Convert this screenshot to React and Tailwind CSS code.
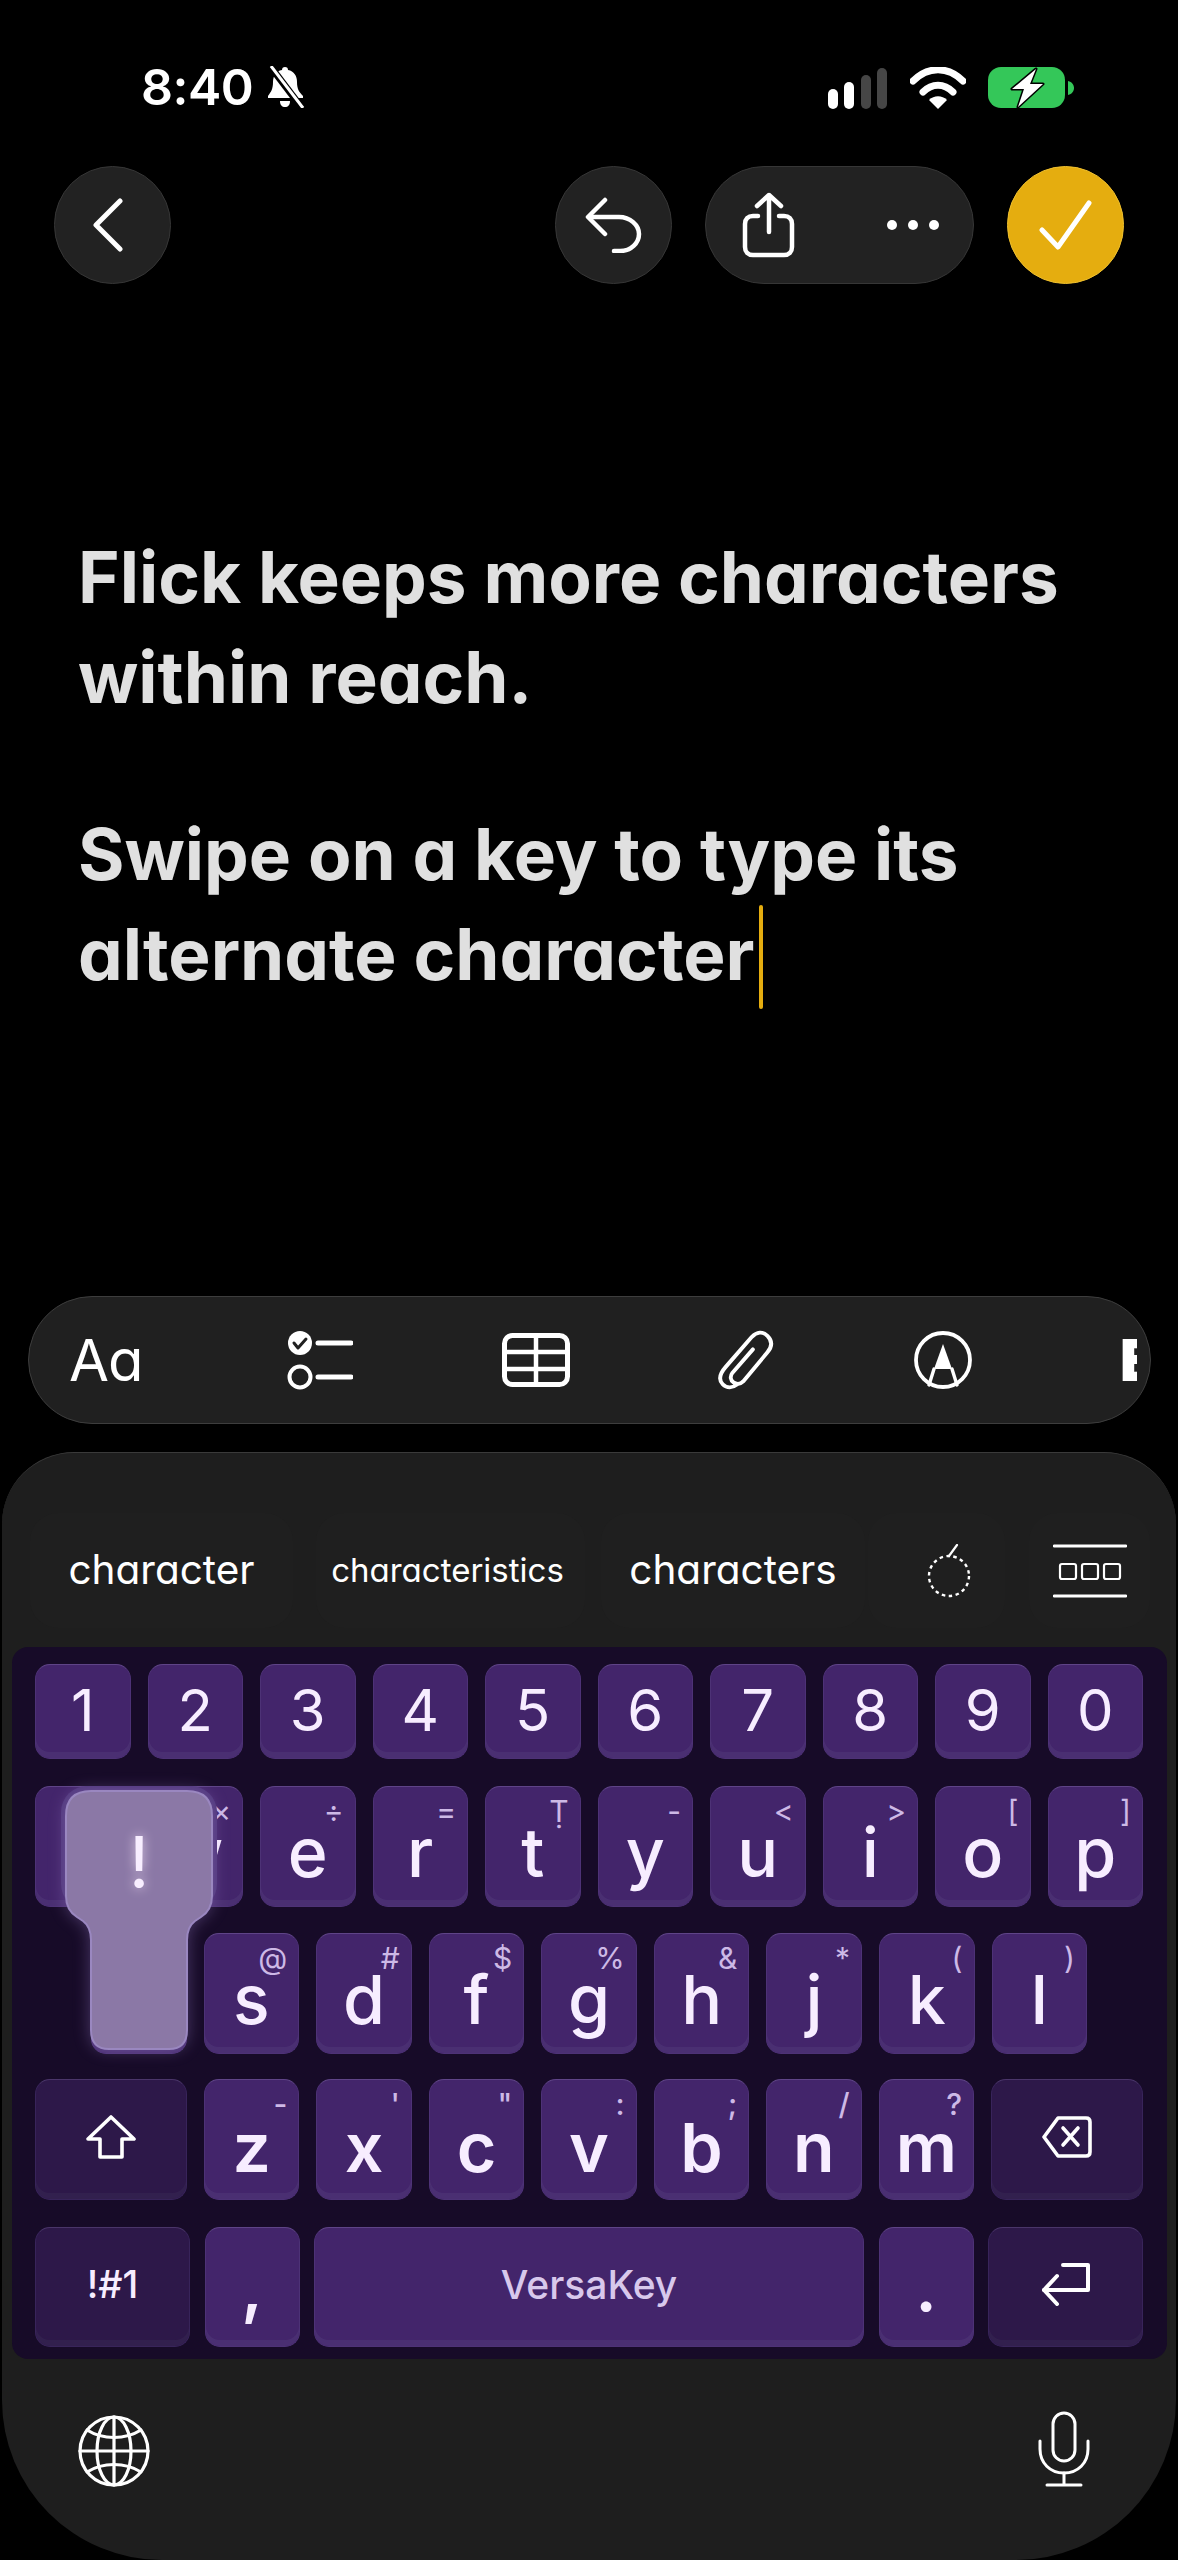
const INTER = "font-['Inter','Liberation_Sans',sans-serif]";

function Key({ main, sub, row = 'letter', dark = false, width = 'flex-1', children }) {
  const text =
    row === 'digit'
      ? 'pt-[16px] text-[58px] font-normal'
      : row === 'punct'
        ? 'pt-[24px] text-[68px] font-semibold'
        : row === 'low'
          ? 'pt-[33px] text-[68px] font-semibold'
          : 'pt-[31px] text-[68px] font-medium';
  return (
    <div
      className={`relative ${width} min-w-0 h-full rounded-[15px] border ${
        dark
          ? 'bg-[#2d1849] border-[#38245a] border-t-[#4a3569] shadow-[inset_0_-6px_0_#32204e]'
          : 'bg-[#43256b] border-[#4d3276] border-t-[#5f4487] shadow-[inset_0_-6px_0_#4a2f72]'
      } flex justify-center ${children ? 'items-center pb-[6px]' : 'items-start'} text-[#f7edff] leading-none`}
    >
      {sub && (
        <span
          className={`absolute top-[9px] right-[11px] text-[30px] leading-[30px] text-[#cdb9e6] ${
            row === 'low' ? 'font-medium' : 'font-normal'
          }`}
        >
          {sub}
        </span>
      )}
      {main && <span className={`${text} leading-none`}>{main}</span>}
      {children}
    </div>
  );
}

function Row({ className = '', children }) {
  return <div className={`flex ${className}`}>{children}</div>;
}

function RoundBtn({ children, className = 'bg-[#222222] border border-[#363636]' }) {
  return (
    <div className={`w-[117px] h-[118px] rounded-full flex items-center justify-center ${className}`}>{children}</div>
  );
}

const ic = { fill: 'none', stroke: 'white', strokeLinecap: 'round', strokeLinejoin: 'round' };

export default function App() {
  return (
    <div className={`relative w-[1178px] h-[2560px] bg-black overflow-hidden flex flex-col ${INTER} [font-feature-settings:'cv11']`}>
      {/* status bar */}
      <div className="h-[166px] pt-[66px] pl-[141px] pr-[103px] flex justify-between items-start text-white">
        <div className="flex items-center gap-[12px] h-[42px]">
          <span className="text-[50px] leading-[42px] font-semibold tracking-[-0.5px]">8:40</span>
          <svg width="41" height="42" viewBox="0 0 41 42">
            <path d="M20 1c2 0 3 1 3 3 6 1 9 6 9 12 0 7 2 10 6 14v2H3v-2c3-4 5-7 5-14 0-6 3-11 9-12 0-2 1-3 3-3z" fill="white" />
            <path d="M15 35h10c0 4-2 6-5 6s-5-2-5-6z" fill="white" />
            <path d="M5 0l32 42" stroke="black" strokeWidth="7" />
            <path d="M6 0l32 42" stroke="white" strokeWidth="3" />
          </svg>
        </div>
        <div className="flex items-start">
          <svg width="60" height="42" viewBox="0 0 60 42" className="mt-[2px]">
            <rect x="0" y="21" width="10" height="20" rx="5" fill="white" />
            <rect x="16" y="14" width="10" height="27" rx="5" fill="white" />
            <rect x="33" y="7" width="10" height="34" rx="5" fill="#464646" />
            <rect x="49" y="0" width="10" height="41" rx="5" fill="#464646" />
          </svg>
          <svg width="56" height="42" viewBox="0 0 56 42" className="ml-[22px] mt-[1px]">
            <path d="M3 14C18-1 38-1 53 14" {...ic} strokeWidth="7" />
            <path d="M13 25C22 16 34 16 43 25" {...ic} strokeWidth="7" />
            <path d="M19 33c5-5 13-5 18 0l-9 9z" fill="white" />
          </svg>
          <svg width="87" height="44" viewBox="0 0 87 44" className="ml-[22px]">
            <rect x="0" y="1" width="77" height="41" rx="13" fill="#34c759" />
            <path d="M80 15c4 1 6 4 6 7s-2 6-6 7z" fill="#34c759" />
            <path d="M48 3L24 23h12l-6 18 25-23H42z" fill="white" stroke="black" strokeWidth="3" strokeLinejoin="round" paintOrder="stroke" />
          </svg>
        </div>
      </div>

      {/* nav */}
      <div className="px-[54px] flex justify-between">
        <RoundBtn>
          <svg width="33" height="54" viewBox="0 0 33 54" className="mr-[10px]">
            <path d="M29 3L5 27l24 24" {...ic} strokeWidth="5" />
          </svg>
        </RoundBtn>
        <div className="flex gap-[33px]">
          <RoundBtn>
            <svg width="57" height="56" viewBox="0 0 57 56">
              <path d="M20 3L3 20l17 17" {...ic} strokeWidth="4.5" />
              <path d="M4 20h30c11 0 20 8 20 17s-8 17-19 17h-6" {...ic} strokeWidth="4.5" />
            </svg>
          </RoundBtn>
          <div className="w-[269px] h-[118px] rounded-[59px] bg-[#222222] border border-[#363636] flex items-center justify-between pl-[36px] pr-[34px]">
            <svg width="53" height="66" viewBox="0 0 53 66">
              <path d="M27 3v37M15 14L27 3l12 11" {...ic} strokeWidth="4.5" />
              <path d="M16 24H11c-5 0-8 3-8 8v23c0 5 3 8 8 8h31c5 0 8-3 8-8V32c0-5-3-8-8-8h-5" {...ic} strokeWidth="4.5" />
            </svg>
            <div className="flex gap-[11px]">
              <span className="w-[10px] h-[10px] rounded-full bg-white" />
              <span className="w-[10px] h-[10px] rounded-full bg-white" />
              <span className="w-[10px] h-[10px] rounded-full bg-white" />
            </div>
          </div>
          <RoundBtn className="bg-[#e5ad0f] border border-[#efc02f]">
            <svg width="53" height="50" viewBox="0 0 53 50">
              <path d="M3 30l16 17L50 3" {...ic} strokeWidth="5" />
            </svg>
          </RoundBtn>
        </div>
      </div>

      {/* note */}
      <div className="mt-[243px] pl-[78px] text-[71px] leading-[100px] font-bold text-[#e0e0e0]">
        <p>Flick keeps more characters</p>
        <p>within reach.</p>
        <p className="mt-[77px]">Swipe on a key to type its</p>
        <p>
          alternate character
          <span className="relative inline-block w-[4px] h-0 ml-[5px]">
            <span className="absolute left-0 bottom-[-29px] w-[4px] h-[104px] rounded-full bg-[#e5ad0f]" />
          </span>
        </p>
      </div>

      {/* bottom */}
      <div className="mt-auto">
        <div className="ml-[28px] w-[1123px] h-[128px] rounded-[64px] bg-[#202020] border border-[#3d3d3d] flex items-center pl-[40px] text-white overflow-hidden">
          <span className="w-[72px] text-[58px] leading-none font-normal tracking-[-1px]">Aa</span>
          <svg width="66" height="60" viewBox="0 0 66 60" className="ml-[146px]">
            <circle cx="13" cy="13" r="12" fill="white" />
            <path d="M7 13l4 5 8-9" fill="none" stroke="#202020" strokeWidth="3" strokeLinecap="round" strokeLinejoin="round" />
            <path d="M31 13h33M31 47h33" {...ic} strokeWidth="5" />
            <circle cx="13" cy="47" r="10.5" {...ic} strokeWidth="4" />
          </svg>
          <svg width="68" height="54" viewBox="0 0 68 54" className="ml-[149px]">
            <rect x="2.5" y="2.5" width="63" height="49" rx="8" {...ic} strokeWidth="5" />
            <path d="M2 19h64M2 36h64M34 3v48" {...ic} strokeWidth="4.5" />
          </svg>
          <svg width="58" height="62" viewBox="0 0 58 62" className="ml-[146px]">
            <path d="M37 20L16 44c-3 4-2 8 1 10s7 2 10-1L52 23c5-6 5-12 0-17s-11-4-16 1L9 38C2 46 2 52 6 56s10 4 15 0" {...ic} strokeWidth="4" transform="translate(1 1) scale(0.97)" />
          </svg>
          <svg width="58" height="58" viewBox="0 0 58 58" className="ml-[140px]">
            <circle cx="29" cy="29" r="27" {...ic} strokeWidth="3.8" />
            <path d="M29 13l-9 25h18z" fill="white" />
            <path d="M20 38l-5 16M38 38l5 16" {...ic} strokeWidth="3.4" />
          </svg>
          <span className="ml-[148px] w-[17px] overflow-hidden text-[58px] leading-none font-black">E</span>
        </div>

        {/* keyboard */}
        <div className="mt-[28px] mx-[2px] h-[1108px] rounded-t-[72px] rounded-b-[160px] bg-[#1e1e1e] border-t border-[#3a3a3a] flex flex-col">
          <div className="mt-[60px] h-[115px] pl-[28px] flex text-white leading-none">
            <div className="w-[263px] rounded-[28px] bg-[#1f1f1f] flex items-center justify-center text-[40.5px]">character</div>
            <div className="ml-[23px] w-[269px] pr-[6px] rounded-[28px] bg-[#1f1f1f] flex items-center justify-center text-[33px]">characteristics</div>
            <div className="ml-[16px] w-[264px] rounded-[28px] bg-[#1f1f1f] flex items-center justify-center text-[40.5px]">characters</div>
            <div className="ml-[3px] w-[137px] rounded-[28px] bg-[#1f1f1f] flex items-center justify-center">
              <svg width="44" height="54" viewBox="0 0 44 54" className="ml-[24px]">
                <circle cx="22" cy="32" r="20" fill="none" stroke="white" strokeWidth="2.4" strokeDasharray="3.5 3.5" />
                <path d="M22 12L30 1" {...ic} strokeWidth="2.2" />
              </svg>
            </div>
            <div className="ml-[24px] w-[121px] rounded-[28px] bg-[#1f1f1f] flex items-center justify-center">
              <svg width="74" height="54" viewBox="0 0 74 54">
                <path d="M1 2h72M1 52h72" {...ic} strokeWidth="2.8" />
                <rect x="7" y="20" width="16" height="15" rx="2" {...ic} strokeWidth="2.2" />
                <rect x="29" y="20" width="16" height="15" rx="2" {...ic} strokeWidth="2.2" />
                <rect x="51" y="20" width="16" height="15" rx="2" {...ic} strokeWidth="2.2" />
              </svg>
            </div>
          </div>

          <div className="relative mt-[19px] ml-[10px] mr-[9px] h-[712px] rounded-[16px] bg-[#170b28] pt-[17px] pl-[23px] pr-[24px]">
            <Row className="gap-[17px] h-[95px]">
              {['1', '2', '3', '4', '5', '6', '7', '8', '9', '0'].map((d) => (
                <Key key={d} main={d} row="digit" />
              ))}
            </Row>
            <Row className="gap-[17px] h-[121px] mt-[27px]">
              {[
                ['q', '+'],
                ['w', '×'],
                ['e', '÷'],
                ['r', '='],
                ['t', 'Ṭ'],
                ['y', '-'],
                ['u', '<'],
                ['i', '>'],
                ['o', '['],
                ['p', ']'],
              ].map(([m, s]) => (
                <Key key={m} main={m} sub={s} />
              ))}
            </Row>
            <Row className="gap-[17px] h-[121px] mt-[26px] mx-[56px]">
              {[
                ['a', '!'],
                ['s', '@'],
                ['d', '#'],
                ['f', '$'],
                ['g', '%'],
                ['h', '&'],
                ['j', '*'],
                ['k', '('],
                ['l', ')'],
              ].map(([m, s]) => (
                <Key key={m} main={m} sub={s} />
              ))}
            </Row>
            <Row className="gap-[17px] h-[121px] mt-[25px]">
              <Key dark width="w-[152px] shrink-0">
                <svg width="50" height="44" viewBox="0 0 50 44">
                  <path d="M25 2L48 24H36v18H14V24H2z" {...ic} strokeWidth="3.6" />
                </svg>
              </Key>
              {[
                ['z', '-'],
                ['x', "'"],
                ['c', '"'],
                ['v', ':'],
                ['b', ';'],
                ['n', '/'],
                ['m', '?'],
              ].map(([m, s]) => (
                <Key key={m} main={m} sub={s} row="low" />
              ))}
              <Key dark width="w-[152px] shrink-0">
                <svg width="50" height="44" viewBox="0 0 50 44">
                  <path d="M16 3h28c2 0 4 1 4 4v30c0 3-2 4-4 4H16L2 22z" {...ic} strokeWidth="3.6" />
                  <path d="M21 13l15 17M36 13L21 30" {...ic} strokeWidth="3.6" />
                </svg>
              </Key>
            </Row>
            <Row className="gap-[14.5px] h-[120px] mt-[27px]">
              <Key dark width="w-[155px] shrink-0">
                <span className="text-[38px] font-medium text-[#f7edff]">!#1</span>
              </Key>
              <Key main="," row="punct" width="w-[95px] shrink-0" />
              <Key width="flex-1">
                <span className="text-[39px] font-medium text-[#d8c8ec] [font-feature-settings:'cv11'_0]">VersaKey</span>
              </Key>
              <Key main="." row="punct" width="w-[95px] shrink-0" />
              <Key dark width="w-[155px] shrink-0">
                <svg width="50" height="44" viewBox="0 0 50 44">
                  <path d="M22 3h25v25H3" {...ic} strokeWidth="4" />
                  <path d="M16 14L3 28l13 14" {...ic} strokeWidth="4" />
                </svg>
              </Key>
            </Row>

            {/* flick popup */}
            <div className="absolute left-[49px] top-[139px] w-[156px] h-[124px] rounded-[26px] bg-[#4f367a]" />
            <svg
              width="148"
              height="260"
              viewBox="0 0 148 260"
              className="absolute left-[53px] top-[143px] drop-shadow-[0_0_8px_rgba(170,140,220,0.35)]"
            >
              <path
                d="M26 1H122Q147 1 147 26V106Q147 120 136 127L130 131Q122 137 122 150V240Q122 259 104 259H44Q26 259 26 240V150Q26 137 18 131L12 127Q1 120 1 106V26Q1 1 26 1Z"
                fill="#8b78a6"
                stroke="#9a87c0"
                strokeWidth="2"
              />
            </svg>
            <span className="absolute left-[53px] top-[171px] w-[148px] text-center text-[72px] leading-[88px] font-normal text-[#f8eeff] drop-shadow-[0_0_6px_rgba(255,240,255,0.7)]">
              !
            </span>
          </div>

          <div className="flex-1 pl-[76px] pr-[86px] pt-[56px] flex justify-between items-start">
            <svg width="72" height="72" viewBox="0 0 72 72">
              <circle cx="36" cy="36" r="34" {...ic} strokeWidth="3.2" />
              <ellipse cx="36" cy="36" rx="17" ry="34" {...ic} strokeWidth="3.2" />
              <path d="M36 2v68M2 36h68" {...ic} strokeWidth="3.2" />
              <path d="M9 15c16 10 38 10 54 0M9 57c16-10 38-10 54 0" {...ic} strokeWidth="3.2" />
            </svg>
            <svg width="52" height="76" viewBox="0 0 52 76" className="mt-[-4px]">
              <rect x="15" y="2" width="22" height="48" rx="11" {...ic} strokeWidth="3" />
              <path d="M2 30v8c0 14 10 24 24 24s24-10 24-24v-8" {...ic} strokeWidth="3" />
              <path d="M26 62v12M9 74h34" {...ic} strokeWidth="3" />
            </svg>
          </div>
        </div>
      </div>
    </div>
  );
}
